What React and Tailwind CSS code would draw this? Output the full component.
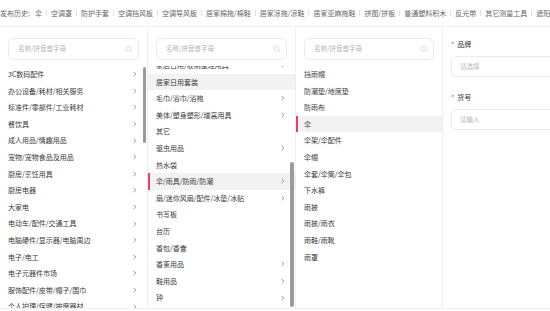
import React from "react";

const topItems = ["空调罩","防护手套","空调挡风板","空调导风板","居家棉拖/棉鞋","居家凉拖/凉鞋","居家亚麻拖鞋","拼图/拼板","普通塑料积木","反光带","其它测量工具","遮阳用品"];

const col1 = [
  ["3C数码配件", true],["办公设备/耗材/相关服务", true],["标准件/零部件/工业耗材", true],["餐饮具", true],
  ["成人用品/情趣用品", true],["宠物/宠物食品及用品", true],["厨房/烹饪用具", true],["厨房电器", true],
  ["大家电", true],["电动车/配件/交通工具", true],["电脑硬件/显示器/电脑周边", true],["电子/电工", true],
  ["电子元器件市场", true],["服饰配件/皮带/帽子/围巾", true],["个人护理/保健/按摩器材", true],
];
const col2 = [
  ["家居日用/收纳整理用具", true],["居家日用套装", false, "hover"],["毛巾/浴巾/浴袍", true],["美体/塑身塑形/增高用具", true],
  ["其它", false],["驱虫用品", true],["热水袋", false],["伞/雨具/防雨/防潮", true, "sel"],
  ["扇/迷你风扇/配件/冰垫/冰贴", true],["书写板", false],["台历", false],["香包/香囊", false],
  ["香薰用品", true],["鞋用品", true],["钟", true],["坐垫/靠垫", true],
];
const col3 = [
  ["挡雨帽"],["防潮垫/地席垫"],["防雨布"],["伞", false, "sel"],["伞架/伞配件"],["伞帽"],
  ["伞套/伞筒/伞包"],["下水裤"],["雨披"],["雨披/雨衣"],["雨鞋/雨靴"],["雨罩"],
];

function Chevron() {
  return (
    <svg className="ml-auto shrink-0" width="4" height="6" viewBox="0 0 4 6" fill="none">
      <path d="M1 1.2l1.8 1.8-1.8 1.8" stroke="#8a8a8a" strokeWidth="0.9" strokeLinecap="round" strokeLinejoin="round" />
    </svg>
  );
}

function Search() {
  return (
    <div className="mx-2 mt-[11px] h-[22px] shrink-0 rounded-[6px] border border-[#ebebeb] flex items-center pl-[9px] pr-[5px] text-[6.5px] text-[#b5b5b5]">
      <span>名称/拼音首字母</span>
      <svg className="ml-auto" width="8" height="8" viewBox="0 0 8 8" fill="none">
        <circle cx="3.5" cy="3.5" r="2.6" stroke="#d5d5d5" strokeWidth="0.8" />
        <path d="M5.5 5.5L7 7" stroke="#d5d5d5" strokeWidth="0.8" strokeLinecap="round" />
      </svg>
    </div>
  );
}

function Row({ text, arrow, state }) {
  let cls = "h-[16.6px] flex items-center pr-[10px] text-[7px] text-[#3a3a3a] whitespace-nowrap ";
  if (state === "sel") cls += "bg-[#f2f2f2] border-l-2 border-[#f03a5f] pl-[6px]";
  else if (state === "hover") cls += "bg-[#f2f2f2] pl-2";
  else cls += "pl-2";
  return (
    <div className={cls}>
      <span>{text}</span>
      {arrow ? <Chevron /> : null}
    </div>
  );
}

export default function App() {
  return (
    <div className="w-[550px] h-[311px] overflow-hidden bg-white font-['Noto_Sans_CJK_SC','Noto_Sans',sans-serif]">
      <div className="h-[27px] flex items-center whitespace-nowrap overflow-hidden text-[7px] text-[#666] border-b border-[#f0f0f0]">
        <span className="shrink-0">发布历史:</span>
        <span className="ml-[5px] shrink-0">伞</span>
        {topItems.map((t) => (
          <React.Fragment key={t}>
            <span className="mx-[4px] w-px h-[6px] bg-[#e0e0e0] shrink-0" />
            <span className="shrink-0">{t}</span>
          </React.Fragment>
        ))}
      </div>
      <div className="flex h-[282px] border-b border-[#f0f0f0]">
        <div className="w-[148px] shrink-0 border-r border-[#efefef] flex flex-col">
          <Search />
          <div className="relative mt-[6px] flex-1 overflow-hidden">
            {col1.map(([t, a]) => <Row key={t} text={t} arrow={a} />)}
            <div className="absolute right-[1px] top-[1px] w-[3px] h-[76px] rounded-full bg-[#9a9a9a]" />
          </div>
        </div>
        <div className="w-[148px] shrink-0 border-r border-[#efefef] flex flex-col">
          <Search />
          <div className="relative mt-[6px] flex-1 overflow-hidden">
            <div className="-mt-[9px]">
              {col2.map(([t, a, s]) => <Row key={t} text={t} arrow={a} state={s} />)}
            </div>
            <div className="absolute right-[1px] top-[96px] bottom-[1px] w-[4px] rounded-full bg-[#9a9a9a]" />
          </div>
        </div>
        <div className="w-[147px] shrink-0 border-r border-[#efefef] flex flex-col">
          <Search />
          <div className="relative mt-[6px] flex-1 overflow-hidden">
            {col3.map(([t, a, s]) => <Row key={t} text={t} arrow={a} state={s} />)}
          </div>
        </div>
        <div className="flex-1 overflow-hidden pl-2">
          <div className="mt-[12px] flex items-center text-[7px] text-[#333] h-[10px]">
            <span className="text-[#f03a5f] mr-[3px]">*</span>品牌
          </div>
          <div className="mt-[7px] h-[21px] w-[140px] rounded-[5px] border border-[#ebebeb] flex items-center pl-[8px] text-[6.5px] text-[#b5b5b5]">
            请选择
          </div>
          <div className="mt-[15px] flex items-center text-[7px] text-[#333] h-[10px]">
            <span className="text-[#f03a5f] mr-[3px]">*</span>货号
          </div>
          <div className="mt-[7px] h-[21px] w-[140px] rounded-[5px] border border-[#ebebeb] flex items-center pl-[8px] text-[6.5px] text-[#b5b5b5]">
            请输入
          </div>
        </div>
      </div>
    </div>
  );
}
